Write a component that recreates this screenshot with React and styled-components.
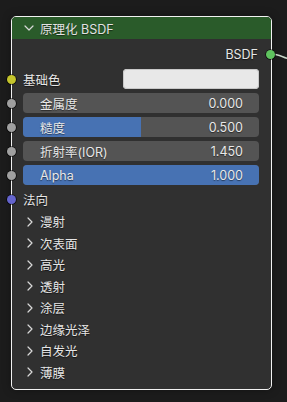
import React from "react";
import styled, { createGlobalStyle } from "styled-components";

const GlobalStyle = createGlobalStyle`
  html, body {
    margin: 0;
    padding: 0;
    background: #1c1c1c;
  }
  body {
    font-family: Inter, "Noto Sans CJK SC", "DejaVu Sans", sans-serif;
    font-size: 12.5px;
    color: #e4e4e4;
  }
`;

const sliders = [
  { label: "金属度", value: "0.000", fill: 0 },
  { label: "糙度", value: "0.500", fill: 0.5 },
  { label: "折射率(IOR)", value: "1.450", fill: 0 },
  { label: "Alpha", value: "1.000", fill: 1 },
];

const panels = ["漫射", "次表面", "高光", "透射", "涂层", "边缘光泽", "自发光", "薄膜"];

function Chevron({ down }) {
  return (
    <ChevronIcon width="10" height="10" viewBox="0 0 10 10">
      {down ? (
        <polyline points="1,3 5,7 9,3" />
      ) : (
        <polyline points="3,1 7,5 3,9" />
      )}
    </ChevronIcon>
  );
}

function App() {
  return (
    <>
      <GlobalStyle />
      <Canvas>
        <Wire width="20" height="20" viewBox="0 0 20 20">
          <path d="M0 6 C 6 6, 10 9, 20 12" />
        </Wire>
        <Node>
          <Header>
            <Chevron down />
            <span>原理化 BSDF</span>
          </Header>
          <Body>
            <OutputRow>
              <Label>BSDF</Label>
              <Socket $color="#5fc35f" $side="right" />
            </OutputRow>

            <ColorRow>
              <Socket $color="#c4c42c" />
              <Label>基础色</Label>
              <ColorField />
            </ColorRow>

            {sliders.map((s) => (
              <SliderRow key={s.label}>
                <Socket $color="#a0a0a0" />
                <Slider>
                  <SliderFill style={{ width: `${s.fill * 100}%` }} />
                  <SliderText>{s.label}</SliderText>
                  <SliderText>{s.value}</SliderText>
                </Slider>
              </SliderRow>
            ))}

            <InputRow>
              <Socket $color="#6464cc" />
              <Label>法向</Label>
            </InputRow>

            <Panels>
              {panels.map((p) => (
                <PanelRow key={p}>
                  <Chevron />
                  <Label>{p}</Label>
                </PanelRow>
              ))}
            </Panels>
          </Body>
        </Node>
      </Canvas>
    </>
  );
}

const Canvas = styled.div`
  position: relative;
  width: 287px;
  height: 402px;
  padding: 16px 0 0 11px;
  box-sizing: border-box;
  overflow: hidden;
`;

const Wire = styled.svg`
  position: absolute;
  left: 272px;
  top: 48px;
  fill: none;
  stroke: #c9d6c9;
  stroke-width: 1.4;
`;

const Node = styled.div`
  width: 261px;
  height: 374px;
  box-sizing: border-box;
  border: 1px solid #f2f2f2;
  border-radius: 5px;
  background: #303030;
  box-shadow: 0 0 8px rgba(0, 0, 0, 0.35);
  display: flex;
  flex-direction: column;
`;

const Header = styled.div`
  height: 22px;
  flex: none;
  background: #2a5b2a;
  border-radius: 4px 4px 0 0;
  display: flex;
  align-items: center;
  gap: 6px;
  padding-left: 12px;
  color: #e2e2e2;
  text-shadow: 0 1px 1px rgba(0, 0, 0, 0.5);
`;

const ChevronIcon = styled.svg`
  flex: none;
  fill: none;
  stroke: #d8d8d8;
  stroke-width: 1.2;
  stroke-linecap: round;
  stroke-linejoin: round;
`;

const Body = styled.div`
  display: flex;
  flex-direction: column;
  padding: 5px 12px 0 11px;
`;

const Label = styled.span`
  color: #e6e6e6;
  text-shadow: 0 1px 1px rgba(0, 0, 0, 0.6);
  white-space: nowrap;
`;

const Row = styled.div`
  position: relative;
  height: 20px;
  display: flex;
  align-items: center;
`;

const OutputRow = styled(Row)`
  justify-content: flex-end;
  padding-right: 1px;
`;

const ColorRow = styled(Row)`
  margin-top: 5px;
  justify-content: space-between;
`;

const InputRow = styled(Row)`
  margin-top: 4px;
`;

const SliderRow = styled(Row)`
  margin-top: 4px;
`;

const Socket = styled.span`
  position: absolute;
  top: 50%;
  ${(p) => (p.$side === "right" ? "right: -15.5px;" : "left: -16px;")}
  width: 9px;
  height: 9px;
  margin-top: -4.5px;
  border-radius: 50%;
  background: ${(p) => p.$color};
  box-shadow: 0 0 0 0.8px rgba(0, 0, 0, 0.7);
`;

const ColorField = styled.div`
  width: 136px;
  height: 20px;
  border-radius: 4px;
  background: #e8e8e8;
  box-shadow: inset 0 0 0 1px #c8c8c8;
`;

const Slider = styled.div`
  position: relative;
  flex: 1;
  height: 20px;
  border-radius: 4px;
  background: #545454;
  overflow: hidden;
  display: flex;
  align-items: center;
  justify-content: space-between;
  padding: 0 16px 0 17px;
  box-sizing: border-box;
`;

const SliderFill = styled.div`
  position: absolute;
  left: 0;
  top: 0;
  bottom: 0;
  background: #4772b3;
`;

const SliderText = styled.span`
  position: relative;
  color: #e8e8e8;
  text-shadow: 0 1px 1px rgba(0, 0, 0, 0.5);
`;

const Panels = styled.div`
  margin-top: 2px;
  display: flex;
  flex-direction: column;
`;

const PanelRow = styled.div`
  height: 21.5px;
  display: flex;
  align-items: center;
  gap: 5px;
  padding-left: 2px;
`;

export default App;
